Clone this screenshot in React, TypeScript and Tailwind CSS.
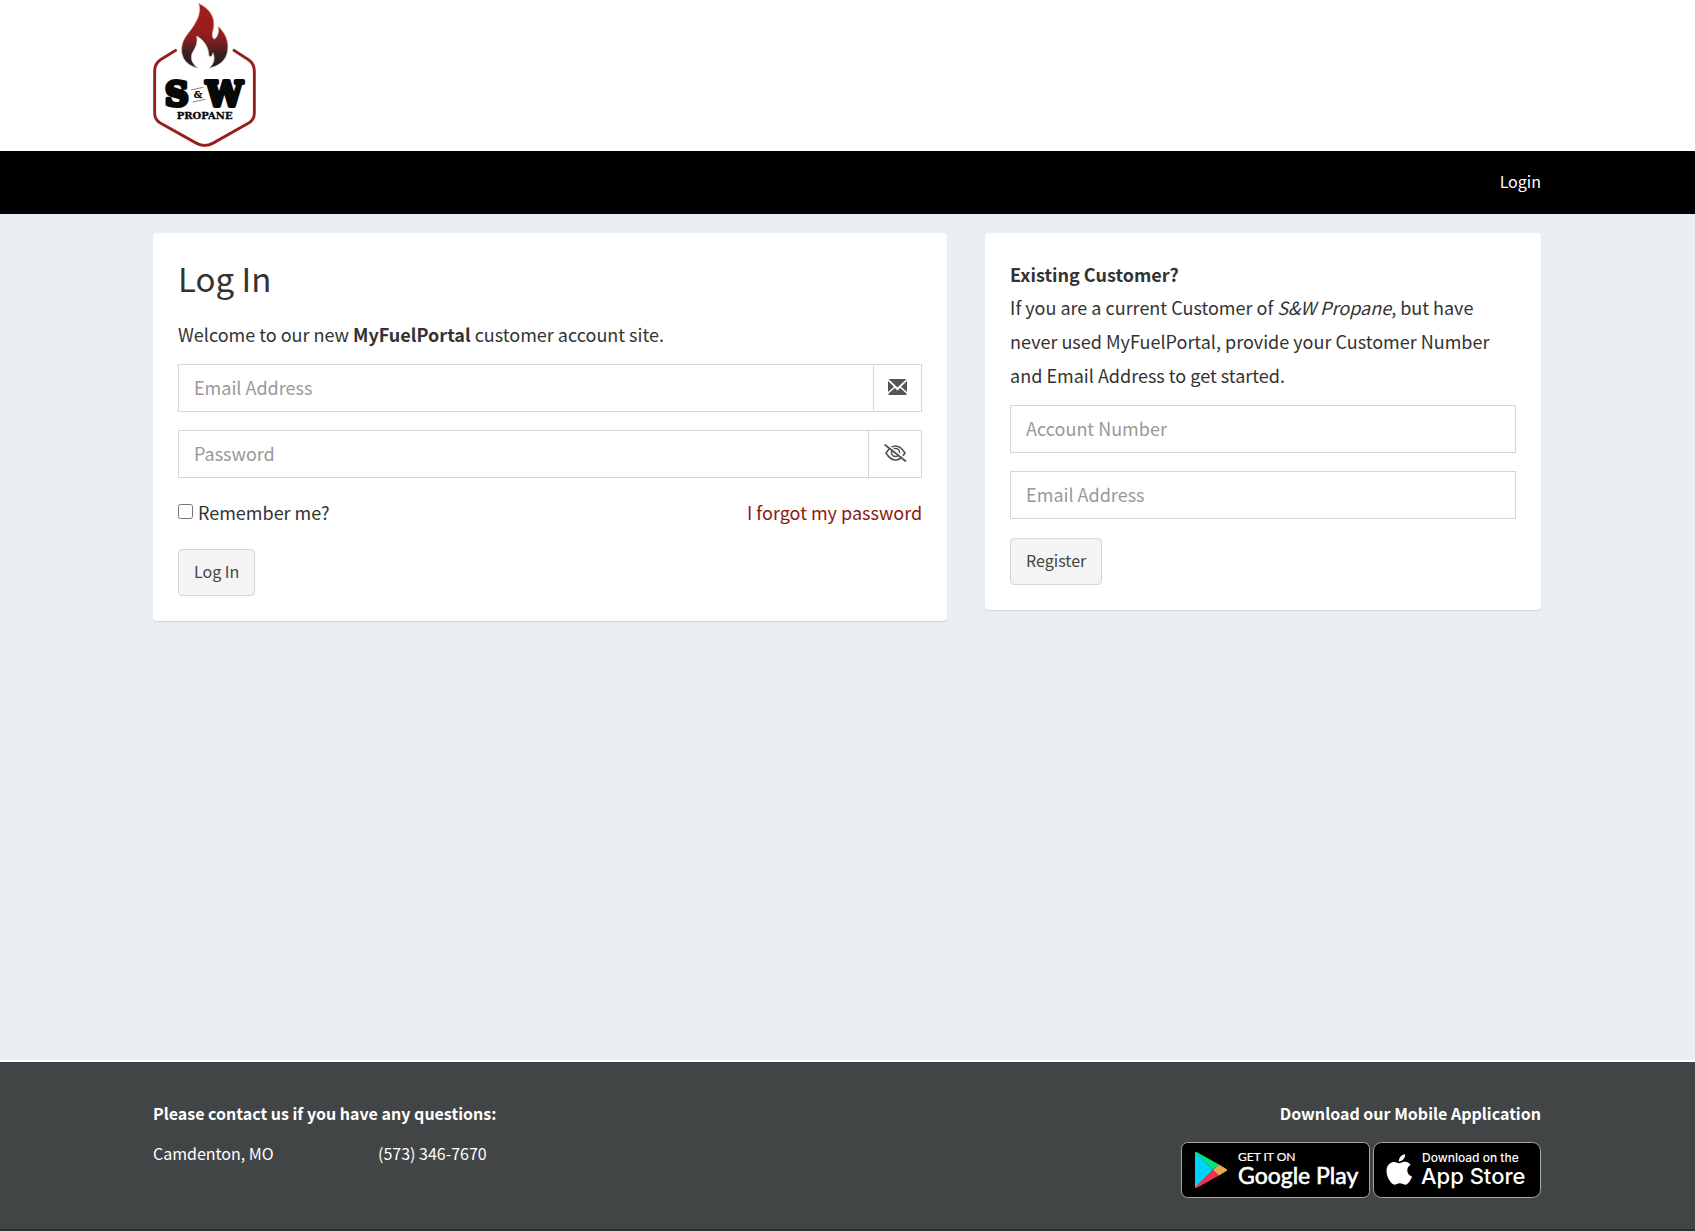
import React, { useState } from 'react';

interface TextFieldProps {
  id: string;
  label: string;
  type?: string;
  value: string;
  onChange: (value: string) => void;
  addon?: React.ReactNode;
}

interface SubmitButtonProps {
  children: React.ReactNode;
}

const styles = {
  card: "rounded bg-white px-[25px] py-[25px] shadow-[0_1px_1px_rgba(0,0,0,0.12)]",
  container: "mx-auto w-full max-w-[1429px] pl-5 pr-[21px]",
};

const Logo: React.FC = () => (
  <svg viewBox="39 0 312 453" className="h-[151px] w-[104px]" role="img" aria-label="S&W Propane">
    <defs>
      <linearGradient id="flame" x1="0" y1="0" x2="0" y2="1">
        <stop offset="0" stopColor="#a51e20" />
        <stop offset="0.48" stopColor="#961c1e" />
        <stop offset="0.62" stopColor="#722022" />
        <stop offset="0.78" stopColor="#382022" />
        <stop offset="1" stopColor="#1f1c1e" />
      </linearGradient>
    </defs>
    <path
      d="M107 151 L62 179 Q44 191 44 213 L44 340 Q44 358 59 368 L168 429 Q194 444 220 429 L328 368 Q343 358 343 340 L343 213 Q343 191 325 179 L282 151"
      fill="none"
      stroke="#d9c3a5"
      strokeWidth="10"
      strokeLinecap="round"
    />
    <path
      d="M107 151 L62 179 Q44 191 44 213 L44 340 Q44 358 59 368 L168 429 Q194 444 220 429 L328 368 Q343 358 343 340 L343 213 Q343 191 325 179 L282 151"
      fill="none"
      stroke="#931e20"
      strokeWidth="8"
      strokeLinecap="round"
    />
    <path
      d="M176 10 C210 26 228 54 220 88 C215 104 217 116 223 117 C233 112 238 96 234 79 C254 96 267 122 263 150 C260 180 238 198 208 204 C222 192 226 176 219 158 C217 168 212 172 207 168 C206 142 194 122 170 108 C174 130 166 144 157 158 C149 176 158 194 174 204 C142 198 122 174 125 144 C127 112 150 98 164 72 C178 50 182 30 176 10 Z"
      fill="url(#flame)"
      stroke="#d9c3a5"
      strokeWidth="2"
    />
    <g fontFamily="'DejaVu Serif', serif" fontWeight="700" fill="#080808" stroke="#080808" strokeLinejoin="round">
      <text x="75" y="318" fontSize="98" strokeWidth="12">S</text>
      <text x="198" y="318" fontSize="98" strokeWidth="12">W</text>
      <text x="161" y="294" fontSize="28" strokeWidth="1">&amp;</text>
      <text x="194" y="356" fontSize="30" textAnchor="middle" strokeWidth="1">PROPANE</text>
    </g>
    <path d="M153 270 L190 262 M158 306 L196 298" stroke="#444" strokeWidth="2" />
  </svg>
);

const EnvelopeIcon: React.FC = () => (
  <svg viewBox="0 0 19 16" className="h-4 w-[19px]" fill="#555" aria-hidden="true">
    <path d="M0.5 0H18.5L9.5 8.5Z" />
    <path d="M0 2L6 7.8L0 13Z" />
    <path d="M19 2L13 7.8L19 13Z" />
    <path d="M0.5 16L0.5 14.5L6.8 9L9.5 11.4L12.2 9L18.5 14.5V16Z" />
  </svg>
);

const EyeSlashIcon: React.FC = () => (
  <svg viewBox="0 0 23 18" className="h-[18px] w-[23px]" fill="none" stroke="#555" aria-hidden="true">
    <path d="M2 9C5 4 8 2 11.5 2S18 4 21 9C18 14 15 16 11.5 16S5 14 2 9Z" strokeWidth="1.6" />
    <circle cx="11.5" cy="8.5" r="4" strokeWidth="1.6" />
    <path d="M10 8.5Q10 6.5 12 6.5" strokeWidth="1.2" />
    <path d="M2.5 0L23 16" stroke="#fff" strokeWidth="1.5" />
    <path d="M0.5 0.5L22 17.5" strokeWidth="1.8" />
  </svg>
);

const TextField: React.FC<TextFieldProps> = ({ id, label, type = 'text', value, onChange, addon }) => (
  <div className="mb-[18px] flex h-12 border border-[#d2d6de] bg-white">
    <input
      id={id}
      type={type}
      aria-label={label}
      placeholder={label}
      value={value}
      onChange={(e) => onChange(e.target.value)}
      className="min-w-0 flex-1 px-[15px] pb-px text-[18px] text-[#555] placeholder-[#999] focus:outline-none"
    />
    {addon}
  </div>
);

const SubmitButton: React.FC<SubmitButtonProps> = ({ children }) => (
  <button
    type="submit"
    className="mt-px h-[47px] rounded border border-[#d2d6de] bg-[#f4f4f4] px-[15px] pb-[3px] text-[16px] text-[#444] hover:bg-[#e7e7e7]"
  >
    {children}
  </button>
);

const LoginCard: React.FC = () => {
  const [email, setEmail] = useState('');
  const [password, setPassword] = useState('');
  const [showPassword, setShowPassword] = useState(false);

  return (
    <form className={styles.card} onSubmit={(e) => e.preventDefault()}>
      <h1 className="text-[33px] leading-10">Log In</h1>
      <p className="mt-[19px] mb-[13px] leading-[34px]">
        Welcome to our new <strong>MyFuelPortal</strong> customer account site.
      </p>
      <TextField
        id="login-email"
        label="Email Address"
        value={email}
        onChange={setEmail}
        addon={
          <span className="flex w-12 items-center justify-center border-l border-[#d2d6de] pb-0.5">
            <EnvelopeIcon />
          </span>
        }
      />
      <TextField
        id="login-password"
        label="Password"
        type={showPassword ? 'text' : 'password'}
        value={password}
        onChange={setPassword}
        addon={
          <button
            type="button"
            aria-label="Show password"
            onClick={() => setShowPassword(!showPassword)}
            className="flex w-[53px] items-center justify-center border-l border-[#d2d6de] pb-0.5"
          >
            <EyeSlashIcon />
          </button>
        }
      />
      <div className="mb-5 flex items-center justify-between leading-8">
        <label className="flex items-center gap-[5px]">
          <input type="checkbox" className="mb-0.5 size-[15px]" />
          Remember me?
        </label>
        <a href="#" className="text-[#8b1a10] hover:underline">I forgot my password</a>
      </div>
      <SubmitButton>Log In</SubmitButton>
    </form>
  );
};

const RegisterCard: React.FC = () => {
  const [account, setAccount] = useState('');
  const [email, setEmail] = useState('');

  return (
    <form className={styles.card} onSubmit={(e) => e.preventDefault()}>
      <h2 className="font-bold leading-8">Existing Customer?</h2>
      <p className="mb-[13px] leading-[34px]">
        If you are a current Customer of <em>S&amp;W Propane</em>, but have never used MyFuelPortal, provide your
        Customer Number and Email Address to get started.
      </p>
      <TextField id="register-account" label="Account Number" value={account} onChange={setAccount} />
      <TextField id="register-email" label="Email Address" value={email} onChange={setEmail} />
      <SubmitButton>Register</SubmitButton>
    </form>
  );
};

const GooglePlayBadge: React.FC = () => (
  <svg viewBox="0 0 189 56" className="h-14 w-[189px]">
    <rect x="0.5" y="0.5" width="188" height="55" rx="6" fill="#000" stroke="#a6a6a6" />
    <path d="M14 10V46L32 28Z" fill="#00d2ff" />
    <path d="M14 10.5Q14.5 9.5 16 10.2L38 22.5L32 28Z" fill="#00e676" />
    <path d="M14 45.5Q14.5 46.5 16 45.8L38 33.5L32 28Z" fill="#f43249" />
    <path d="M38 22.5L45.5 27Q47 28 45.5 29L38 33.5L32 28Z" fill="#e6a84f" />
    <g fill="#fff" stroke="#fff" fontFamily="Lato, sans-serif">
      <text x="57" y="19" fontSize="12" strokeWidth="0.2">GET IT ON</text>
      <text x="57" y="42" fontSize="23" strokeWidth="0.6">Google Play</text>
    </g>
  </svg>
);

const AppStoreBadge: React.FC = () => (
  <svg viewBox="0 0 168 56" className="h-14 w-[168px]">
    <rect x="0.5" y="0.5" width="167" height="55" rx="8" fill="#000" stroke="#a6a6a6" />
    <g transform="translate(9.5 8.8) scale(1.85)">
      <path
        d="M13.4 10.6c0-2 1.7-3 1.8-3.1-1-1.4-2.5-1.6-3-1.6-1.3-.1-2.5.8-3.2.8-.6 0-1.6-.8-2.7-.7C4.9 6 3.6 6.800 2.900 8c-1.500 2.500-.4 6.200 1 8.200.7 1 1.600 2.100 2.700 2.100 1.100 0 1.500-.7 2.800-.7s1.700.7 2.800.7c1.200 0 1.900-1 2.600-2 .8-1.200 1.200-2.300 1.200-2.400 0 0-2.600-.9-2.600-3.300z M11.300 4.600c.6-.7 1-1.700.9-2.700-.8 0-1.900.6-2.500 1.300-.5.6-1 1.600-.9 2.600 1 .1 1.900-.5 2.500-1.200z"
        fill="#fff"
      />
    </g>
    <g fill="#fff" fontFamily="Inter, sans-serif" fontWeight="500">
      <text x="49" y="20" fontSize="12">Download on the</text>
      <text x="48" y="42" fontSize="22">App Store</text>
    </g>
  </svg>
);

const Footer: React.FC = () => (
  <footer className="border-t-2 border-b-2 border-t-white border-b-[#333033] bg-[#424545] text-[16px] text-white">
    <div className={`${styles.container} flex flex-wrap justify-between gap-6 pt-[39px] pb-[31px]`}>
      <div>
        <h3 className="font-bold leading-6">Please contact us if you have any questions:</h3>
        <div className="mt-4 flex leading-6">
          <span className="w-[225px]">Camdenton, MO</span>
          <span>(573) 346-7670</span>
        </div>
      </div>
      <div className="flex flex-col items-end">
        <h3 className="font-bold leading-6">Download our Mobile Application</h3>
        <div className="mt-[17px] flex gap-[3px]">
          <a href="#" aria-label="Get it on Google Play"><GooglePlayBadge /></a>
          <a href="#" aria-label="Download on the App Store"><AppStoreBadge /></a>
        </div>
      </div>
    </div>
  </footer>
);

const App: React.FC = () => (
  <div className="flex min-h-screen flex-col bg-[#ebeff4] font-['Noto_Sans_CJK_SC',sans-serif] text-[18px] text-[#333]">
    <header>
      <div className="bg-white">
        <div className={styles.container}>
          <Logo />
        </div>
      </div>
      <nav className="bg-black">
        <div className={`${styles.container} flex h-[63px] items-center justify-end pb-1`}>
          <a href="#" className="text-[16px] text-white hover:underline">Login</a>
        </div>
      </nav>
    </header>
    <main className={`${styles.container} grid flex-1 grid-cols-1 items-start gap-[38px] pt-[19px] lg:grid-cols-[10fr_7fr]`}>
      <LoginCard />
      <RegisterCard />
    </main>
    <Footer />
  </div>
);

export default App;
